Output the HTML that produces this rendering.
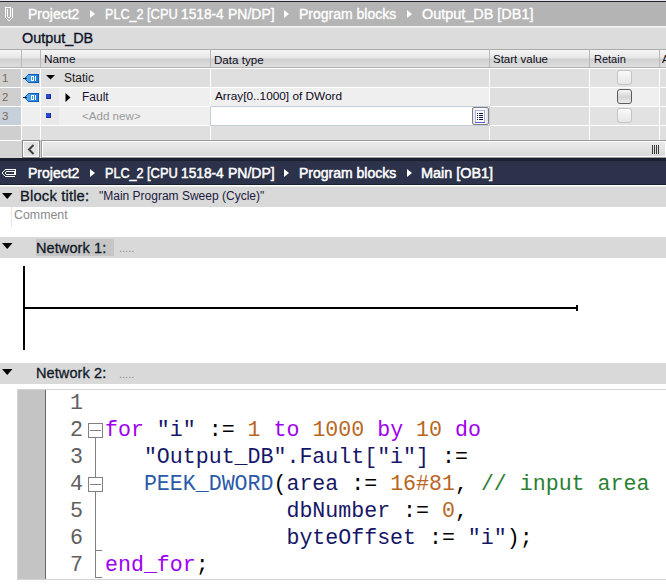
<!DOCTYPE html>
<html><head><meta charset="utf-8">
<style>
*{margin:0;padding:0;box-sizing:border-box}
html,body{width:666px;height:587px;overflow:hidden;background:#fff}
body{position:relative;font-family:"Liberation Sans",sans-serif}
.a{position:absolute}
.t{position:absolute;white-space:pre;line-height:1}
.bc{color:#fff;font-size:14px;-webkit-text-stroke:0.35px #fff}
.bc2{-webkit-text-stroke:0.5px #fff}
.hd{font-size:11px;color:#0a0a1a}
.code{position:absolute;left:105px;top:390px;font-family:"Liberation Mono",monospace;font-size:21.6px;line-height:27px;white-space:pre;color:#161666}
.ln{position:absolute;left:57px;width:26px;text-align:right;top:390px;font-family:"Liberation Mono",monospace;font-size:21.67px;line-height:27px;white-space:pre;color:#606060}
.kw{color:#a000f0}
.num{color:#b8661e}
.fn{color:#2a5aa8}
.cm{color:#2a8030}
.blk{color:#000}
</style></head><body>

<!-- top breadcrumb bar -->
<div class="a" style="left:0;top:0;width:666px;height:1px;background:#e6e6e6"></div>
<div class="a" style="left:0;top:1px;width:666px;height:1px;background:#1f2535"></div>
<div class="a" style="left:0;top:2px;width:666px;height:24px;background:#b4b4b4"></div>
<svg class="a" style="left:0;top:4px" width="18" height="20" shape-rendering="crispEdges"><g fill="#fff"><rect x="5" y="3" width="6" height="1"/><rect x="5" y="4" width="1" height="1"/><rect x="10" y="4" width="1" height="1"/><rect x="12" y="4" width="1" height="1"/><rect x="5" y="5" width="1" height="1"/><rect x="7" y="5" width="1" height="1"/><rect x="10" y="5" width="1" height="1"/><rect x="12" y="5" width="1" height="1"/><rect x="5" y="6" width="1" height="1"/><rect x="7" y="6" width="1" height="1"/><rect x="10" y="6" width="1" height="1"/><rect x="12" y="6" width="1" height="1"/><rect x="5" y="7" width="1" height="1"/><rect x="7" y="7" width="1" height="1"/><rect x="10" y="7" width="1" height="1"/><rect x="12" y="7" width="1" height="1"/><rect x="5" y="8" width="1" height="1"/><rect x="7" y="8" width="1" height="1"/><rect x="10" y="8" width="1" height="1"/><rect x="12" y="8" width="1" height="1"/><rect x="5" y="9" width="1" height="1"/><rect x="7" y="9" width="1" height="1"/><rect x="10" y="9" width="1" height="1"/><rect x="12" y="9" width="1" height="1"/><rect x="5" y="10" width="1" height="1"/><rect x="7" y="10" width="1" height="1"/><rect x="10" y="10" width="1" height="1"/><rect x="12" y="10" width="1" height="1"/><rect x="5" y="11" width="1" height="1"/><rect x="7" y="11" width="1" height="1"/><rect x="10" y="11" width="1" height="1"/><rect x="12" y="11" width="1" height="1"/><rect x="5" y="12" width="1" height="1"/><rect x="7" y="12" width="1" height="1"/><rect x="10" y="12" width="1" height="1"/><rect x="12" y="12" width="1" height="1"/><rect x="5" y="13" width="1" height="1"/><rect x="8" y="13" width="2" height="1"/><rect x="12" y="13" width="1" height="1"/><rect x="6" y="14" width="1" height="1"/><rect x="11" y="14" width="1" height="1"/><rect x="7" y="15" width="1" height="1"/><rect x="10" y="15" width="1" height="1"/><rect x="8" y="16" width="2" height="1"/></g></svg>
<div class="t bc" style="left:28px;top:7px">Project2</div>
<svg class="a" style="left:90px;top:10px" width="6" height="8"><path d="M0 0 L5 4 L0 8Z" fill="#fff"/></svg>
<div class="t bc" style="left:105px;top:7px;transform-origin:0 0;transform:scaleX(0.9)">PLC_2</div><div class="t bc" style="left:147px;top:7px;transform-origin:0 0;transform:scaleX(0.92)">[CPU</div><div class="t bc" style="left:181px;top:7px;transform-origin:0 0;transform:scaleX(0.98)">1518-4</div><div class="t bc" style="left:228px;top:7px;transform-origin:0 0;transform:scaleX(1.0)">PN/DP]</div>
<svg class="a" style="left:284px;top:10px" width="6" height="8"><path d="M0 0 L5 4 L0 8Z" fill="#fff"/></svg>
<div class="t bc" style="left:299px;top:7px">Program blocks</div>
<svg class="a" style="left:407px;top:10px" width="6" height="8"><path d="M0 0 L5 4 L0 8Z" fill="#fff"/></svg>
<div class="t bc" style="left:422px;top:7px;transform-origin:0 0;transform:scaleX(1.03)">Output_DB [DB1]</div>

<!-- title area -->
<div class="a" style="left:0;top:26px;width:666px;height:1px;background:#f2f2f2"></div>
<div class="a" style="left:0;top:27px;width:666px;height:22px;background:#dcdcdc"></div>
<div class="a" style="left:0;top:27px;width:666px;height:1px;background:#ebebeb"></div>
<div class="t" style="left:22px;top:31px;font-size:14.4px;color:#0c1428;-webkit-text-stroke:0.35px #0c1428">Output_DB</div>

<!-- table header -->
<div class="a" style="left:0;top:49px;width:666px;height:1px;background:#a9a9a9"></div>
<div class="a" style="left:0;top:50px;width:666px;height:17px;background:linear-gradient(#f6f6f6 0px,#e6e6e6 8px,#cfcfcf 9px,#d4d4d4 11px,#dedede 17px)"></div>
<div class="a" style="left:0;top:67px;width:666px;height:1px;background:#b2b2b2"></div>
<div class="a" style="left:0;top:68px;width:666px;height:1px;background:#fff"></div>
<div class="a" style="left:21px;top:49px;width:1px;height:18px;background:#b8b8b8"></div>
<div class="a" style="left:40px;top:49px;width:1px;height:18px;background:#b8b8b8"></div>
<div class="a" style="left:210px;top:49px;width:1px;height:18px;background:#b8b8b8"></div>
<div class="a" style="left:489px;top:49px;width:1px;height:18px;background:#b8b8b8"></div>
<div class="a" style="left:589px;top:49px;width:1px;height:18px;background:#b8b8b8"></div>
<div class="a" style="left:659px;top:49px;width:1px;height:18px;background:#b8b8b8"></div>
<div class="t hd" style="left:44px;top:54px;font-size:11.8px">Name</div>
<div class="t hd" style="left:214px;top:54px;font-size:11.6px">Data type</div>
<div class="t hd" style="left:493px;top:54px;font-size:11.5px">Start value</div>
<div class="t hd" style="left:594px;top:54px;font-size:11px">Retain</div>
<div class="t hd" style="left:662px;top:54px;font-size:11px">A</div>

<!-- data rows background -->
<div class="a" style="left:0;top:69px;width:666px;height:71px;background:#fff"></div>
<!-- row1 -->
<div class="a" style="left:0;top:69px;width:21px;height:18px;background:#cfcfcf"></div>
<div class="a" style="left:22px;top:69px;width:18px;height:18px;background:#dfdfdf"></div>
<div class="a" style="left:41px;top:69px;width:169px;height:18px;background:#dedede"></div>
<div class="a" style="left:211px;top:69px;width:278px;height:18px;background:#dfdfdf"></div>
<div class="a" style="left:490px;top:69px;width:99px;height:18px;background:#dfdfdf"></div>
<div class="a" style="left:590px;top:69px;width:69px;height:18px;background:#e2e2e2"></div>
<div class="a" style="left:660px;top:69px;width:6px;height:18px;background:#dfdfdf"></div>
<!-- row2 -->
<div class="a" style="left:0;top:88px;width:21px;height:18px;background:#cfcfcf"></div>
<div class="a" style="left:22px;top:88px;width:18px;height:18px;background:#efefef"></div>
<div class="a" style="left:41px;top:88px;width:18px;height:18px;background:#e9e9e9"></div>
<div class="a" style="left:59px;top:88px;width:151px;height:18px;background:#efefef"></div>
<div class="a" style="left:211px;top:88px;width:278px;height:18px;background:#efefef"></div>
<div class="a" style="left:490px;top:88px;width:99px;height:18px;background:#dfdfdf"></div>
<div class="a" style="left:590px;top:88px;width:69px;height:18px;background:#efefef"></div>
<div class="a" style="left:660px;top:88px;width:6px;height:18px;background:#dfdfdf"></div>
<!-- row3 -->
<div class="a" style="left:0;top:107px;width:21px;height:18px;background:#c6d0da"></div>
<div class="a" style="left:22px;top:107px;width:18px;height:18px;background:#efefef"></div>
<div class="a" style="left:41px;top:107px;width:18px;height:18px;background:#e9e9e9"></div>
<div class="a" style="left:59px;top:107px;width:151px;height:18px;background:#efefef"></div>
<div class="a" style="left:210px;top:106px;width:280px;height:20px;background:#fff;border:1px solid #c4cfdb"></div>
<div class="a" style="left:490px;top:107px;width:99px;height:18px;background:#dfdfdf"></div>
<div class="a" style="left:590px;top:107px;width:69px;height:18px;background:#e2e2e2"></div>
<div class="a" style="left:660px;top:107px;width:6px;height:18px;background:#dfdfdf"></div>
<!-- row4 (empty) -->
<div class="a" style="left:0;top:126px;width:21px;height:14px;background:#cfcfcf"></div>
<div class="a" style="left:22px;top:126px;width:18px;height:14px;background:#dfdfdf"></div>
<div class="a" style="left:41px;top:126px;width:169px;height:14px;background:#dfdfdf"></div>
<div class="a" style="left:211px;top:126px;width:278px;height:14px;background:#dfdfdf"></div>
<div class="a" style="left:490px;top:126px;width:99px;height:14px;background:#dfdfdf"></div>
<div class="a" style="left:590px;top:126px;width:69px;height:14px;background:#dfdfdf"></div>
<div class="a" style="left:660px;top:126px;width:6px;height:14px;background:#dfdfdf"></div>

<!-- row numbers -->
<div class="t" style="left:2px;top:73px;font-size:11.5px;color:#7a6a5a">1</div>
<div class="t" style="left:2px;top:92px;font-size:11.5px;color:#7a6a5a">2</div>
<div class="t" style="left:2px;top:111px;font-size:11.5px;color:#7a6a5a">3</div>

<!-- tag icons -->
<svg class="a" style="left:20px;top:70px" width="22" height="16" shape-rendering="crispEdges">
  <defs><linearGradient id="tg70" x1="0" x2="1" y1="0" y2="0"><stop offset="0" stop-color="#5ab4f4"/><stop offset="1" stop-color="#1a7ad8"/></linearGradient></defs>
  <polygon points="8,4 19,4 19,13 8,13 4,8.5" fill="#0c5cc0"/>
  <polygon points="8.5,5 18,5 18,12 8.5,12 5.5,8.5" fill="url(#tg70)"/>
  <rect x="3" y="8" width="4" height="1" fill="#0a1a30"/>
  <g fill="#fff"><rect x="11" y="6" width="3" height="1"/><rect x="11" y="10" width="3" height="1"/><rect x="11" y="6" width="1" height="5"/><rect x="13" y="6" width="1" height="5"/><rect x="15" y="6" width="1" height="5"/></g>
</svg>
<svg class="a" style="left:20px;top:89px" width="22" height="16" shape-rendering="crispEdges">
  <defs><linearGradient id="tg89" x1="0" x2="1" y1="0" y2="0"><stop offset="0" stop-color="#5ab4f4"/><stop offset="1" stop-color="#1a7ad8"/></linearGradient></defs>
  <polygon points="8,4 19,4 19,13 8,13 4,8.5" fill="#0c5cc0"/>
  <polygon points="8.5,5 18,5 18,12 8.5,12 5.5,8.5" fill="url(#tg89)"/>
  <rect x="3" y="8" width="4" height="1" fill="#0a1a30"/>
  <g fill="#fff"><rect x="11" y="6" width="3" height="1"/><rect x="11" y="10" width="3" height="1"/><rect x="11" y="6" width="1" height="5"/><rect x="13" y="6" width="1" height="5"/><rect x="15" y="6" width="1" height="5"/></g>
</svg>
<!-- name column -->
<svg class="a" style="left:46px;top:75px" width="9" height="5"><path d="M0 0 H9 L4.5 4.6Z" fill="#000"/></svg>
<div class="t" style="left:64px;top:72px;font-size:12px;color:#1a1a1a">Static</div>
<div class="a" style="left:46px;top:94px;width:5px;height:5px;background:#2a48d0;box-shadow:inset -1px -1px 0 #1a2a90"></div>
<svg class="a" style="left:65px;top:93px" width="6" height="9"><path d="M0.5 0 L5.5 4.5 L0.5 9Z" fill="#000"/></svg>
<div class="t" style="left:82px;top:91px;font-size:12px;color:#1a1030">Fault</div>
<div class="a" style="left:46px;top:113px;width:5px;height:5px;background:#2a48d0;box-shadow:inset -1px -1px 0 #1a2a90"></div>
<div class="t" style="left:82px;top:110px;font-size:11.6px;color:#9a9a9a">&lt;Add new&gt;</div>

<div class="t" style="left:215px;top:91px;font-size:11.8px;color:#0a0a1a">Array[0..1000] of DWord</div>

<!-- dropdown button -->
<div class="a" style="left:472px;top:107px;width:17px;height:18px;border:1px solid #808080;border-radius:2px;background:linear-gradient(90deg,#e4e4e4,#fff 30%,#fff 70%,#e0e0e0)"></div>
<svg class="a" style="left:474px;top:109px" width="12" height="15" shape-rendering="crispEdges">
  <rect x="1" y="1" width="10" height="13" fill="#fff"/>
  <rect x="1" y="1" width="10" height="1" fill="#a8b0f0"/>
  <rect x="1" y="1" width="1" height="13" fill="#a8b0f0"/>
  <rect x="10" y="1" width="1" height="13" fill="#a8b0f0"/>
  <rect x="1" y="13" width="10" height="1" fill="#5060e0"/>
  <g fill="#10104a"><rect x="3" y="4" width="1" height="1"/><rect x="5" y="4" width="4" height="1"/>
  <rect x="3" y="6" width="1" height="1"/><rect x="5" y="6" width="4" height="1"/>
  <rect x="3" y="8" width="1" height="1"/><rect x="5" y="8" width="4" height="1"/>
  <rect x="3" y="10" width="1" height="1"/><rect x="5" y="10" width="4" height="1"/></g>
</svg>

<!-- checkboxes -->
<div class="a" style="left:617px;top:70px;width:15px;height:15px;border:1px solid #c4c4c4;border-radius:3px;background:linear-gradient(#fafafa,#e6e6e6)"></div>
<div class="a" style="left:617px;top:89px;width:15px;height:15px;border:1px solid #5a5a5a;border-radius:3px;background:linear-gradient(#f6f6f6,#d4d4d4 55%,#ececec)"></div>
<div class="a" style="left:617px;top:108px;width:15px;height:15px;border:1px solid #c4c4c4;border-radius:3px;background:linear-gradient(#fafafa,#e6e6e6)"></div>

<!-- scrollbar -->
<div class="a" style="left:0;top:140px;width:666px;height:18px;background:#d4d4d4"></div>
<div class="a" style="left:0;top:140px;width:21px;height:1px;background:#fff"></div>
<div class="a" style="left:22px;top:140px;width:18px;height:18px;border:1px solid #8a8a8a;background:#e2e2e2;box-shadow:inset 0 0 0 1px #fff"></div>
<svg class="a" style="left:27px;top:144px" width="9" height="11"><path d="M6.5 1 L2 5.5 L6.5 10" fill="none" stroke="#404040" stroke-width="2"/></svg>
<div class="a" style="left:41px;top:140px;width:625px;height:18px;border:1px solid #9a9a9a;border-right:none;background:linear-gradient(#ececec,#d8d8d8);box-shadow:inset 0 0 0 1px #fff"></div>
<svg class="a" style="left:651px;top:145px" width="9" height="9"><g fill="#3a3a3a"><rect x="1" y="0" width="1" height="9"/><rect x="3" y="0" width="1" height="9"/><rect x="5" y="0" width="1" height="9"/><rect x="7" y="0" width="1" height="9"/></g></svg>

<!-- dark breadcrumb -->

<div class="a" style="left:0;top:158px;width:666px;height:27px;background:#2b3249"></div>
<div class="a" style="left:0;top:158px;width:666px;height:3px;background:#1b2031"></div>
<div class="a" style="left:0;top:184px;width:666px;height:1px;background:#1b2031"></div>
<svg class="a" style="left:0;top:164px" width="18" height="16" shape-rendering="crispEdges"><g fill="#fff"><rect x="5" y="5" width="11" height="1"/><rect x="4" y="6" width="1" height="1"/><rect x="15" y="6" width="1" height="1"/><rect x="3" y="7" width="1" height="1"/><rect x="6" y="7" width="9" height="1"/><rect x="15" y="7" width="1" height="1"/><rect x="2" y="8" width="1" height="1"/><rect x="5" y="8" width="1" height="1"/><rect x="14" y="8" width="1" height="1"/><rect x="15" y="8" width="1" height="1"/><rect x="2" y="9" width="1" height="1"/><rect x="5" y="9" width="1" height="1"/><rect x="14" y="9" width="1" height="1"/><rect x="15" y="9" width="1" height="1"/><rect x="3" y="10" width="1" height="1"/><rect x="6" y="10" width="10" height="1"/><rect x="4" y="11" width="1" height="1"/><rect x="5" y="12" width="10" height="1"/></g></svg>
<div class="t bc bc2" style="left:28px;top:166px">Project2</div>
<svg class="a" style="left:90px;top:169px" width="6" height="8"><path d="M0 0 L5 4 L0 8Z" fill="#fff"/></svg>
<div class="t bc bc2" style="left:105px;top:166px;transform-origin:0 0;transform:scaleX(0.9)">PLC_2</div><div class="t bc bc2" style="left:147px;top:166px;transform-origin:0 0;transform:scaleX(0.92)">[CPU</div><div class="t bc bc2" style="left:181px;top:166px;transform-origin:0 0;transform:scaleX(0.98)">1518-4</div><div class="t bc bc2" style="left:228px;top:166px;transform-origin:0 0;transform:scaleX(1.0)">PN/DP]</div>
<svg class="a" style="left:284px;top:169px" width="6" height="8"><path d="M0 0 L5 4 L0 8Z" fill="#fff"/></svg>
<div class="t bc bc2" style="left:299px;top:166px">Program blocks</div>
<svg class="a" style="left:407px;top:169px" width="6" height="8"><path d="M0 0 L5 4 L0 8Z" fill="#fff"/></svg>
<div class="t bc bc2" style="left:421px;top:166px;transform-origin:0 0;transform:scaleX(1.03)">Main [OB1]</div>

<!-- block title -->
<div class="a" style="left:0;top:185px;width:666px;height:1px;background:#ffffff"></div>
<div class="a" style="left:0;top:186px;width:666px;height:1px;background:#ececec"></div>
<div class="a" style="left:0;top:187px;width:666px;height:20px;background:#d9d9d9"></div>
<svg class="a" style="left:2px;top:193px" width="11" height="7"><path d="M0 0 H10.5 L5.25 6Z" fill="#000"/></svg>
<div class="t" style="left:20px;top:189px;font-size:14.8px;-webkit-text-stroke:0.3px #101828;letter-spacing:0.15px;color:#101828">Block title:</div>
<div class="t" style="left:99px;top:190px;font-size:12px;color:#202040">"Main Program Sweep (Cycle)"</div>
<div class="a" style="left:11px;top:207px;width:1px;height:20px;background:#e8e8e8"></div>
<div class="t" style="left:14px;top:209px;font-size:12.4px;color:#8a8a8a">Comment</div>

<!-- network 1 -->
<div class="a" style="left:0;top:237px;width:666px;height:21px;background:#d9d9d9"></div>
<div class="a" style="left:36px;top:239px;width:78px;height:17px;background:#c6c6c6"></div>
<svg class="a" style="left:2px;top:243px" width="11" height="7"><path d="M0 0 H10.5 L5.25 6Z" fill="#000"/></svg>
<div class="t" style="left:36px;top:241px;font-size:14.5px;-webkit-text-stroke:0.3px #101828;letter-spacing:0.1px;color:#101828">Network 1:</div>
<div class="t" style="left:119px;top:243px;font-size:11px;color:#8a8a8a">.....</div>

<!-- ladder -->
<div class="a" style="left:23px;top:266px;width:2px;height:84px;background:#000"></div>
<div class="a" style="left:25px;top:307px;width:552px;height:2px;background:#000"></div>
<div class="a" style="left:576px;top:305px;width:2px;height:6px;background:#000"></div>

<!-- network 2 -->
<div class="a" style="left:0;top:363px;width:666px;height:21px;background:#d9d9d9"></div>
<svg class="a" style="left:2px;top:369px" width="11" height="7"><path d="M0 0 H10.5 L5.25 6Z" fill="#000"/></svg>
<div class="t" style="left:36px;top:366px;font-size:14.5px;-webkit-text-stroke:0.3px #101828;letter-spacing:0.1px;color:#101828">Network 2:</div>
<div class="t" style="left:119px;top:369px;font-size:11px;color:#8a8a8a">.....</div>

<!-- code editor -->
<div class="a" style="left:17px;top:389px;width:649px;height:1px;background:#d4d4d4"></div>
<div class="a" style="left:17px;top:579px;width:649px;height:1px;background:#d4d4d4"></div>
<div class="a" style="left:17px;top:389px;width:1px;height:191px;background:#d4d4d4"></div>
<div class="a" style="left:18px;top:390px;width:27px;height:189px;background:#c4c4c4"></div>
<div class="a" style="left:45px;top:390px;width:1px;height:189px;background:#6a6a6a"></div>

<div class="ln">1
2
3
4
5
6
7</div>

<!-- folding -->
<div class="a" style="left:88px;top:423px;width:15px;height:15px;border:1px solid #808080;background:#fff"></div>
<div class="a" style="left:90px;top:430px;width:11px;height:1px;background:#808080"></div>
<div class="a" style="left:95px;top:438px;width:1px;height:39px;background:#808080"></div>
<div class="a" style="left:88px;top:477px;width:15px;height:15px;border:1px solid #808080;background:#fff"></div>
<div class="a" style="left:90px;top:484px;width:11px;height:1px;background:#808080"></div>
<div class="a" style="left:95px;top:492px;width:1px;height:86px;background:#808080"></div>
<div class="a" style="left:95px;top:550px;width:7px;height:1px;background:#808080"></div>
<div class="a" style="left:95px;top:577px;width:7px;height:1px;background:#808080"></div>

<div class="code">
<span class="kw">for</span> "i" <span class="blk">:=</span> <span class="num">1</span> <span class="kw">to</span> <span class="num">1000</span> <span class="kw">by</span> <span class="num">10</span> <span class="kw">do</span>
   "Output_DB".Fault["i"] <span class="blk">:=</span>
   <span class="fn">PEEK_DWORD</span><span class="blk">(</span>area <span class="blk">:=</span> <span class="num">16#81</span><span class="blk">,</span> <span class="cm">// input area</span>
              dbNumber <span class="blk">:=</span> <span class="num">0</span><span class="blk">,</span>
              byteOffset <span class="blk">:=</span> "i"<span class="blk">);</span>
<span class="kw">end_for</span><span class="blk">;</span></div>

</body></html>
